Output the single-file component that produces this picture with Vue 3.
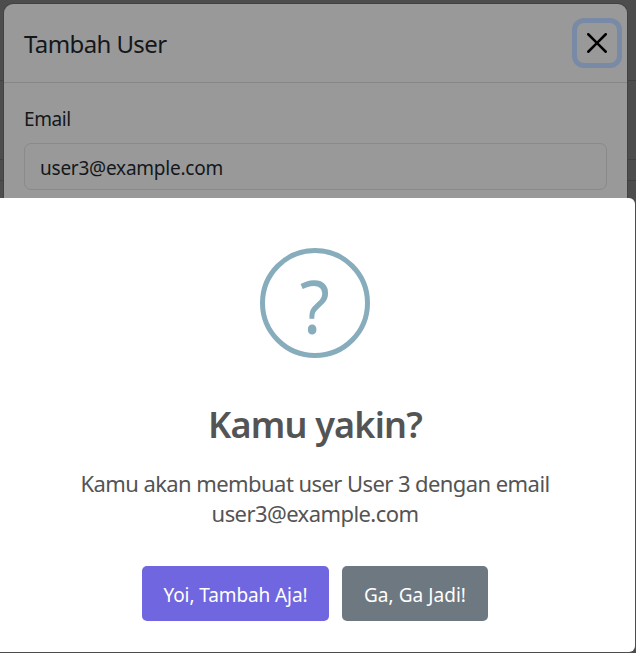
<script setup>
import { ref } from 'vue'

const email = ref('user3@example.com')
const rules = [80, 159, 180]
</script>

<template>
  <div class="page">
    <i v-for="y in rules" :key="y" class="rule" :style="{ top: y + 'px' }"></i>
    <section class="modal">
      <header class="modal-header">
        <h5 class="modal-title"><span>Tambah User</span></h5>
        <button class="close" aria-label="Close">
          <svg viewBox="0 0 16 16" width="20" height="20">
            <path d="M.293.293a1 1 0 0 1 1.414 0L8 6.586 14.293.293a1 1 0 1 1 1.414 1.414L9.414 8l6.293 6.293a1 1 0 0 1-1.414 1.414L8 9.414l-6.293 6.293a1 1 0 0 1-1.414-1.414L6.586 8 .293 1.707a1 1 0 0 1 0-1.414z" />
          </svg>
        </button>
      </header>
      <div class="modal-body">
        <label class="label" for="email">Email</label>
        <input id="email" v-model="email" class="input" />
      </div>
    </section>

    <section class="dialog" role="dialog">
      <div class="icon"><span>?</span></div>
      <h2 class="heading">Kamu yakin?</h2>
      <p class="message">
        <span class="line first">Kamu akan membuat user User 3 dengan email</span>
        <span class="line second">user3@example.com</span>
      </p>
      <div class="actions">
        <button class="btn confirm">Yoi, Tambah Aja!</button>
        <button class="btn cancel">Ga, Ga Jadi!</button>
      </div>
    </section>
  </div>
</template>

<style>
body { margin: 0; background: #4d4d4d; }
</style>

<style scoped>
* { box-sizing: border-box; }
.page {
  position: relative;
  width: 636px;
  height: 653px;
  overflow: hidden;
  background: #4d4d4d;
  font-family: "Noto Sans", "Open Sans", sans-serif;
}
.rule { position: absolute; left: 0; width: 100%; height: 1px; background: #414141; }
.modal {
  position: relative;
  width: 623px;
  height: 300px;
  margin-left: 4px;
  top: 4px;
  border-radius: 9px;
  background: #999;
  box-shadow: 0 0 0 1px #424242;
  color: #14171a;
}
.modal-header {
  display: flex;
  align-items: center;
  justify-content: space-between;
  height: 79px;
  padding: 0 10px 0 20px;
  border-bottom: 1px solid #858687;
}
.modal-title { margin: 0; font-size: 24px; font-weight: 400; line-height: 37px; letter-spacing: -0.6px; }
.close {
  display: flex;
  align-items: center;
  justify-content: center;
  width: 40px;
  height: 40px;
  padding: 0;
  border: 0;
  border-radius: 7px;
  background: transparent;
  box-shadow: 0 0 0 5px #788aa5;
}
.modal-body { padding: 21px 20px 20px; }
.label { display: block; margin-bottom: 9px; font-size: 19px; line-height: 30px; letter-spacing: -0.4px; }
.input {
  display: block;
  width: 583px;
  height: 47px;
  padding: 2px 15px 0;
  border: 1px solid #888a8c;
  border-radius: 7px;
  outline: 0;
  background: transparent;
  color: #14171a;
  font-family: inherit;
  font-size: 19px;
  letter-spacing: -0.23px;
}
.dialog {
  position: absolute;
  left: -5px;
  top: 198px;
  display: flex;
  flex-direction: column;
  align-items: center;
  width: 640px;
  height: 454px;
  padding-top: 50px;
  border-radius: 6px;
  background: #fff;
  color: #545454;
}
.icon {
  display: flex;
  align-items: center;
  justify-content: center;
  width: 110px;
  height: 110px;
  padding-top: 5px;
  border: 5px solid #87adbd;
  border-radius: 50%;
  color: #87adbd;
  font-size: 73px;
  line-height: 1;
}
.icon span { transform: scaleX(0.95); }
.heading { margin: 41px 0 0; font-size: 36px; font-weight: 600; line-height: 52px; letter-spacing: -0.8px; }
.message { margin: 17px 0 0; font-size: 22px; line-height: 30px; text-align: center; }
.line { display: block; white-space: nowrap; letter-spacing: -0.57px; }
.actions { display: flex; gap: 13px; margin-top: 38px; }
.btn {
  height: 55px;
  padding: 3px 0 0;
  border: 0;
  border-radius: 5px;
  color: #fff;
  font-family: inherit;
  font-size: 19px;
  letter-spacing: -0.1px;
  white-space: nowrap;
}
.confirm { width: 187px; background: #7066e0; }
.cancel { width: 146px; background: #6e7881; letter-spacing: 0.05px; }
</style>
